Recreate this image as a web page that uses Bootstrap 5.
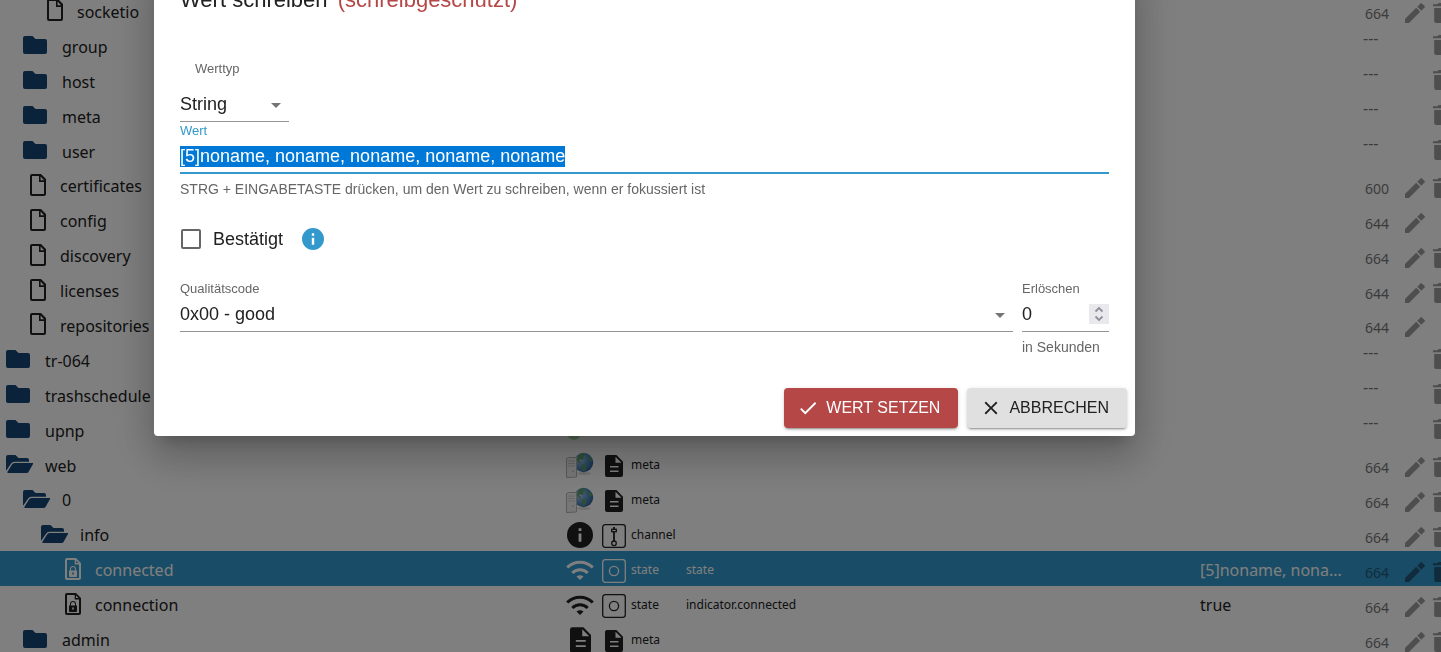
<!DOCTYPE html>
<html lang="de">
<head>
<meta charset="utf-8">
<meta name="viewport" content="width=device-width, initial-scale=1">
<title>Objekte</title>
<link rel="stylesheet" href="https://cdn.jsdelivr.net/npm/bootstrap@5.3.0/dist/css/bootstrap.min.css">
<style>
  body { font-family: "Noto Sans", sans-serif; font-size: 16px; line-height: 24px; color: #212121; }
  /* object tree */
  .objects { width: calc(100% + 22px); height: calc(100vh + 11px); margin-top: -7px; table-layout: fixed; border-collapse: collapse; }
  .objects td { padding: 0; height: 34px; line-height: 20px; white-space: nowrap; vertical-align: middle; }
  .col-tree { width: 39vw; } .col-thumb { width: 40px; } .col-type { width: 84px; }
  .col-value { width: 163px; } .col-perm { width: 42px; } .col-act { width: 28px; } .col-del { width: 30px; }
  .objects svg { display: block; flex: none; }
  .objects .tree-cell { padding-top: 3px; }
  .objects .sub { font-size: 12px; }
  .objects .info-cell { padding-top: 2px; }
  .objects .thumb { padding: 2px 0 0 4px; }
  .objects .kind { padding-top: 4px; }
  .kind span { margin-top: -2px; }
  .kind-icon { width: 24px; margin-right: 5px; }
  .objects .perm { padding: 8px 0 0 2px; font-size: 14px; color: #777; }
  .objects .perm-none { padding: 0 0 14px; color: #777; }
  .act { color: #9c9c9c; border: 0; background: none; padding: 0; display: block; }
  .objects .act-file { padding-top: 6px; }
  .lv0 { padding-left: 6px; } .lv1 { padding-left: 23px; } .lv2 { padding-left: 41px; }
  .f1 { padding-left: 30px; } .f2 { padding-left: 47px; } .f3 { padding-left: 65px; }
  .tree-icon { width: 28px; margin-right: 11px; margin-bottom: 3px; color: #164477; }
  .file-icon { width: 16px; margin-right: 14px; margin-bottom: 3px; }
  .chosen { background: #39c; color: #fff; }
  .objects .chosen .perm, .chosen .act { color: #205878; }
  /* dialog */
  .write-dialog { margin: -40px 306px 0 154px; max-width: none; font-family: "Liberation Sans", Arial, sans-serif; }
  .write-dialog .modal-content { border: 0; border-radius: 4px; color: #212121;
    box-shadow: 0 11px 15px -7px rgba(0,0,0,.2), 0 24px 38px 3px rgba(0,0,0,.14), 0 9px 46px 8px rgba(0,0,0,.12); }
  .write-title { padding: 24px 26px 16px; font-size: 22px; line-height: 32px; font-weight: 400; margin: 0; }
  .write-title span { color: #b54747; margin-left: 4px; }
  .write-body { padding: 28px 26px 0; }
  .tag { display: block; font-size: 13px; line-height: 18px; color: #666; }
  .tag-inset { margin-left: 15px; }
  .tag-focus { color: #39c; }
  .hint { font-size: 14px; line-height: 18px; color: #666; padding-top: 6px; }
  .line { display: block; width: 100%; border: 0; border-bottom: 1px solid #949494; border-radius: 0; padding: 0; background: transparent; font-size: 18px; line-height: 20px; color: #212121; outline: 0; appearance: none; }
  select.line { height: 34px; padding-bottom: 1px; }
  .value-line { border-bottom: 2px solid #39c; height: 30px; padding: 2px 0 6px; margin-top: 4px; }
  .value-line::selection { background: #0078d7; color: #fff; }
  .pick { position: relative; }
  .pick svg { position: absolute; right: 1px; top: 50%; margin-top: -12px; pointer-events: none; }
  .type-pick { width: 109px; margin-top: 10px; }
  .life { width: 87px; }
  .life input { appearance: textfield; height: 34px; padding-bottom: 1px; }
  .life input::-webkit-inner-spin-button { display: none; }
  .life svg { right: 0; margin-top: -11px; }
  .ack-row { padding: 29px 0; }
  .ack-row label { font-size: 18px; line-height: 24px; }
  .tick { width: 20px; height: 20px; border: 2px solid #666; border-radius: 2px; appearance: none; margin: 0 12px 0 1px; background: #fff; }
  .info-mark { color: #39c; margin-left: 19px; }
  .quality { gap: 9px; }
  .actions { padding: 32px 8px 8px; gap: 9px; }
  .raised { border: 0; border-radius: 4px; height: 40px; font-size: 16px; line-height: 24px; padding: 0 18px 0 13px; display: flex; align-items: center; gap: 7px;
    box-shadow: 0 3px 1px -2px rgba(0,0,0,.2), 0 2px 2px rgba(0,0,0,.14), 0 1px 5px rgba(0,0,0,.12); }
  .raised-set { background: #b54747; color: #fff; }
  .raised-cancel { background: #e0e0e0; color: #212121; }
</style>
</head>
<body class="overflow-hidden vh-100">

<svg width="0" height="0" class="position-absolute" aria-hidden="true">
  <symbol id="folder" viewBox="0 0 28 18"><path fill="currentColor" d="M2 0h7.500l3 3H22a2 2 0 0 1 2 2v11a2 2 0 0 1-2 2H2a2 2 0 0 1-2-2V2a2 2 0 0 1 2-2z"/></symbol>
  <symbol id="folder-open" viewBox="0 0 28 18"><path fill="currentColor" d="M2 0h7.500l3 3H21a2 2 0 0 1 2 2v1.700H8.500A4 4 0 0 0 5 8.700L.3 15.500A2 2 0 0 1 0 15V2a2 2 0 0 1 2-2zM8.500 8H26.500c.7 0 .8.500.5 1.100L22.500 17a2 2 0 0 1-1.700 1H2c-.8 0-.9-.6-.5-1.200L6 9.500A3 3 0 0 1 8.500 8z"/></symbol>
  <symbol id="file" viewBox="0 0 16 22"><path fill="currentColor" fill-rule="evenodd" d="M2 0h9l5 5v15a2 2 0 0 1-2 2H2a2 2 0 0 1-2-2V2a2 2 0 0 1 2-2zm0 2v18h12V8H9V2zm8.600.6v3.600h3.400z"/></symbol>
  <symbol id="file-lock" viewBox="0 0 16 22"><path fill="currentColor" fill-rule="evenodd" d="M2 0h9l5 5v15a2 2 0 0 1-2 2H2a2 2 0 0 1-2-2V2a2 2 0 0 1 2-2zm0 2v18h12V6.500h-4.300V2zm9 .6v2.500h2.500zM4 12.500h1V11a3 3 0 0 1 6 0v1.500h1V18a1 1 0 0 1-1 1H5a1 1 0 0 1-1-1zm2 0h4V11a2 2 0 0 0-4 0zm1.200 2v2h1.600v-2z"/></symbol>
  <symbol id="doc" viewBox="0 0 18 22"><path fill="currentColor" fill-rule="evenodd" d="M2 0h9.500L18 6.700V20a2 2 0 0 1-2 2H2a2 2 0 0 1-2-2V2a2 2 0 0 1 2-2zm8.500 1.800v6h6zM5 11v1.600h8.500V11zm0 4.500v1.600h8.500v-1.600z"/></symbol>
  <symbol id="info" viewBox="0 0 24 24"><path fill="currentColor" fill-rule="evenodd" d="M12 0a12 12 0 1 0 0 24 12 12 0 0 0 0-24zm-1.300 5.800h2.600v2.600h-2.600zm0 4.700h2.600v7.700h-2.600z"/></symbol>
  <symbol id="wifi" viewBox="0 0 28 20"><g fill="none" stroke="currentColor" stroke-width="3"><path d="M1.200 7.500a18 18 0 0 1 25.600 0"/><path d="M6.300 13a11 11 0 0 1 15.400 0"/></g><path fill="currentColor" d="M10.500 16.500a6 6 0 0 1 7 0L14 20z"/></symbol>
  <symbol id="state" viewBox="0 0 24 24"><rect x=".7" y=".7" width="22.600" height="22.600" rx="2.500" fill="none" stroke="currentColor" stroke-width="1.300"/><circle cx="12" cy="12" r="4.600" fill="none" stroke="currentColor" stroke-width="1.300"/></symbol>
  <symbol id="channel" viewBox="0 0 24 24"><g fill="none" stroke="currentColor" stroke-width="1.300"><rect x=".7" y=".7" width="22.600" height="22.600" rx="2.500"/><path d="M12 3v14" stroke-width="1.800"/><circle cx="12" cy="19.300" r="2.300"/><rect x="9.700" y="5.300" width="4.600" height="2.400" fill="#fff"/></g></symbol>
  <symbol id="pen" viewBox="0 0 20 20"><path fill="currentColor" d="M0 16v4h4L15.200 8.700l-4-4zM19.500 4.500a1 1 0 0 0 0-1.500L17 .5a1 1 0 0 0-1.500 0L12.300 3.700l4 4z"/></symbol>
  <symbol id="bin" viewBox="0 0 16 20"><path fill="currentColor" d="M1.200 5h13.600v13a2 2 0 0 1-2 2H3.200a2 2 0 0 1-2-2zM0 1.200h4.500L5.700 0h4.600l1.200 1.200H16v2H0z"/></symbol>
  <symbol id="web" viewBox="0 0 28 28">
    <defs><radialGradient id="sea" cx=".3" cy=".35" r=".8"><stop offset="0" stop-color="#a9cdea"/><stop offset=".5" stop-color="#5b93c8"/><stop offset="1" stop-color="#2a5a94"/></radialGradient></defs>
    <ellipse cx="18" cy="22.500" rx="7" ry="1.500" fill="#ddd"/>
    <circle cx="17.500" cy="11.500" r="9.700" fill="url(#sea)"/>
    <path fill="#5c9c6c" d="M12 4.500c2-1.500 4-2.500 6-2.500l1 2-2 2 1 1.500-2 1.500-2-1-1 2 2 1-1 1.500-3-3zM16 13l3 .5 1.500 2-1.500 4-2 1-1-4zM22 5l2.500 1 1.500 4-2 .5-1.500-2z"/>
    <path fill="#efefef" stroke="#b4b4b4" d="M.5 7.500l2-1h8v19.500l-10 .5z"/>
    <path fill="none" stroke="#ccc" d="M2 10h7M2 12.500h7M2 15h7"/><circle cx="7" cy="20" r=".8" fill="#aaa"/>
  </symbol>
</svg>

<table class="objects">
  <colgroup><col class="col-tree"><col class="col-thumb"><col class="col-type"><col><col class="col-value"><col class="col-perm"><col class="col-act"><col class="col-del"></colgroup>
  <tbody id="rows"></tbody>
</table>

<div class="modal-backdrop show"></div>
<div class="modal d-block overflow-hidden" role="dialog" aria-labelledby="dlgTitle">
  <div class="modal-dialog write-dialog">
    <div class="modal-content">
      <h2 class="write-title" id="dlgTitle">Wert schreiben <span>(schreibgeschützt)</span></h2>
      <div class="write-body">
        <label class="tag tag-inset" for="valType">Werttyp</label>
        <div class="pick type-pick">
          <select class="line" id="valType"><option>String</option></select>
          <svg width="24" height="24" viewBox="0 0 24 24"><path fill="#757575" d="M7 10l5 5 5-5z"/></svg>
        </div>
        <label class="tag tag-focus" for="val">Wert</label>
        <input class="line value-line" id="val" type="text" value="[5]noname, noname, noname, noname, noname">
        <div class="hint">STRG + EINGABETASTE drücken, um den Wert zu schreiben, wenn er fokussiert ist</div>
        <div class="d-flex align-items-center ack-row">
          <input type="checkbox" class="tick" id="ack"><label for="ack">Bestätigt</label>
          <svg width="22" height="22" class="info-mark"><use href="#info"/></svg>
        </div>
        <div class="d-flex quality">
          <div class="flex-grow-1">
            <label class="tag" for="quality">Qualitätscode</label>
            <div class="pick"><select class="line" id="quality"><option>0x00 - good</option></select>
              <svg width="24" height="24" viewBox="0 0 24 24"><path fill="#757575" d="M7 10l5 5 5-5z"/></svg></div>
          </div>
          <div class="life">
            <label class="tag" for="expire">Erlöschen</label>
            <div class="pick"><input class="line" id="expire" type="number" value="0">
              <svg width="20" height="20" viewBox="0 0 20 20"><path fill="#e9e9ed" d="M0 0h20v20H0z"/><path fill="none" stroke="#8f8f9d" stroke-width="1.800" d="M6.500 7.500L10 4l3.500 3.500M6.500 12.500L10 16l3.500-3.500"/></svg></div>
            <div class="hint">in Sekunden</div>
          </div>
        </div>
      </div>
      <div class="d-flex justify-content-end actions">
        <button type="button" class="raised raised-set"><svg width="22" height="22" viewBox="0 0 24 24" fill="currentColor"><path d="M9 16.170L4.830 12l-1.420 1.410L9 19 21 7l-1.410-1.410z"/></svg>WERT SETZEN</button>
        <button type="button" class="raised raised-cancel"><svg width="22" height="22" viewBox="0 0 24 24" fill="currentColor"><path d="M19 6.410L17.590 5 12 10.590 6.410 5 5 6.410 10.590 12 5 17.590 6.410 19 12 13.410 17.590 19 19 17.590 13.410 12z"/></svg>ABBRECHEN</button>
      </div>
    </div>
  </div>
</div>

<script src="https://cdn.jsdelivr.net/npm/bootstrap@5.3.0/dist/js/bootstrap.bundle.min.js"></script>
<script>
  // name, icon, indent class, thumb, kind icon, kind text, role, value, mode, has delete button
  const objects = [
    ['socketio', 'file', 'f2', '', '', '', '', '', '664', 1],
    ['group', 'folder', 'lv1'], ['host', 'folder', 'lv1'], ['meta', 'folder', 'lv1'], ['user', 'folder', 'lv1'],
    ['certificates', 'file', 'f1', '', '', '', '', '', '600', 1],
    ['config', 'file', 'f1', '', '', '', '', '', '644', 0],
    ['discovery', 'file', 'f1', '', '', '', '', '', '664', 1],
    ['licenses', 'file', 'f1', '', '', '', '', '', '644', 1],
    ['repositories', 'file', 'f1', '', '', '', '', '', '644', 0],
    ['tr-064', 'folder', 'lv0'], ['trashschedule', 'folder', 'lv0'], ['upnp', 'folder', 'lv0', 'green'],
    ['web', 'folder-open', 'lv0', 'web', 'doc', 'meta', '', '', '664', 1],
    ['0', 'folder-open', 'lv1', 'web', 'doc', 'meta', '', '', '664', 1],
    ['info', 'folder-open', 'lv2', 'info', 'channel', 'channel', '', '', '664', 1],
    ['connected', 'file-lock', 'f3', 'wifi', 'state', 'state', 'state', '[5]noname, nona...', '664', 1],
    ['connection', 'file-lock', 'f3', 'wifi', 'state', 'state', 'indicator.connected', 'true', '664', 1],
    ['admin', 'folder', 'lv1', 'doc', 'doc', 'meta', '', '', '664', 1]
  ];
  const icon = (id, w, h, cls = '') => `<svg width="${w}" height="${h}" class="${cls}"><use href="#${id}"/></svg>`;
  const thumbs = {
    web: icon('web', 28, 28), info: icon('info', 28, 26), wifi: icon('wifi', 28, 20), doc: icon('doc', 21, 26, 'ms-1'),
    green: '<svg width="28" height="20"><ellipse cx="8" cy="10" rx="8" ry="10" fill="#a0dca0"/></svg>'
  };
  document.getElementById('rows').innerHTML = objects.map(([name, ic, level, thumb, kind, kindText, role, value, mode, del]) => {
    const isFile = ic.startsWith('file');
    return `<tr class="${name === 'connected' ? 'chosen' : ''}">
      <td class="tree-cell"><div class="d-flex align-items-center ${level}">${isFile ? icon(ic, 16, 22, 'file-icon') : icon(ic, 28, 18, 'tree-icon')}<span>${name}</span></div></td>
      <td class="thumb">${thumbs[thumb] || ''}</td>
      <td class="kind sub"><div class="d-flex align-items-center">${kind ? `<div class="kind-icon">${kind === 'doc' ? icon('doc', 18, 22, 'mx-auto') : icon(kind, 24, 24)}</div><span>${kindText}</span>` : ''}</div></td>
      <td class="sub info-cell">${role || ''}</td><td class="info-cell">${value || ''}</td>
      <td class="${mode ? 'perm' : 'perm-none'}">${mode || '---'}</td>
      <td class="${mode ? 'act-file' : ''}">${mode ? `<button type="button" class="act" aria-label="Bearbeiten">${icon('pen', 20, 20)}</button>` : ''}</td>
      <td class="${mode ? 'act-file' : ''}">${!mode || del ? `<button type="button" class="act" aria-label="Löschen">${icon('bin', 16, 20)}</button>` : ''}</td></tr>`;
  }).join('');
  const field = document.getElementById('val');
  field.focus({ preventScroll: true });
  field.select();
</script>
</body>
</html>
